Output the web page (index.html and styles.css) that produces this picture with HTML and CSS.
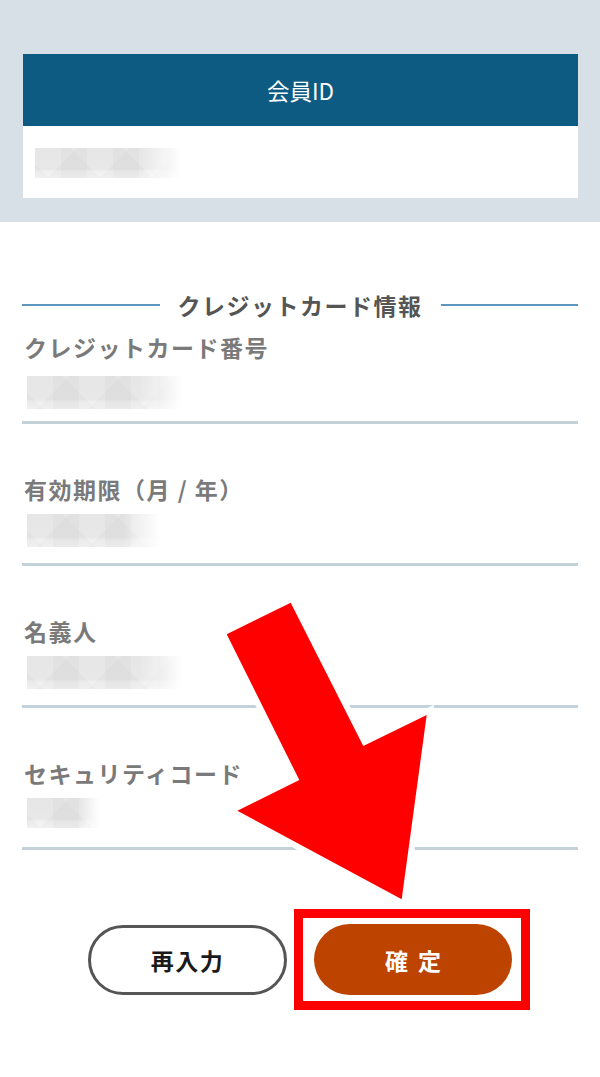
FILE: index.html
```html
<!DOCTYPE html>
<html lang="ja">
<head>
<meta charset="utf-8">
<title>会員ID</title>
<link rel="stylesheet" href="styles.css">
</head>
<body>
<div class="page">
  <section class="top-band">
    <div class="card">
      <div class="card-head">会員ID</div>
      <div class="card-body">
        <div class="blur blur-id"></div>
      </div>
    </div>
  </section>

  <section class="form">
    <h2 class="section-title"><span class="rule"></span><span class="title-text">クレジットカード情報</span><span class="rule"></span></h2>

    <div class="field first">
      <div class="label">クレジットカード番号</div>
      <div class="value"><div class="blur w155"></div></div>
    </div>
    <div class="field">
      <div class="label">有効期限（月 / 年）</div>
      <div class="value"><div class="blur w133"></div></div>
    </div>
    <div class="field">
      <div class="label">名義人</div>
      <div class="value"><div class="blur w155"></div></div>
    </div>
    <div class="field">
      <div class="label">セキュリティコード</div>
      <div class="value"><div class="blur w73"></div></div>
    </div>

    <div class="buttons">
      <button class="btn btn-reset" type="button">再入力</button>
      <div class="confirm-wrap">
        <button class="btn btn-confirm" type="button">確定</button>
        <span class="highlight"></span>
      </div>
    </div>
  </section>

  <svg class="arrow" width="600" height="1077" viewBox="0 0 600 1077" aria-hidden="true">
    <polygon points="226.7,634.3 290.7,602.7 363.3,746 426.7,715 401.7,899.3 237.3,810.7 299.3,780" fill="#ff0000" stroke="#ffffff" stroke-width="12" stroke-linejoin="miter" paint-order="stroke"/>
  </svg>
</div>
</body>
</html>
```

FILE: styles.css
```css
html, body {
  margin: 0;
  padding: 0;
  background: #ffffff;
}

body {
  font-family: "Noto Sans CJK JP", "Noto Sans", sans-serif;
  width: 600px;
}

.page {
  position: relative;
  width: 600px;
  height: 1077px;
  overflow: hidden;
}

.top-band {
  background: #d8e0e7;
  padding: 54px 22px 24px 23px;
}

.card {
  background: #ffffff;
}

.card-head {
  height: 72px;
  background: #0d5a83;
  color: #ffffff;
  font-size: 22.5px;
  font-weight: 400;
  display: flex;
  align-items: center;
  justify-content: center;
}

.card-body {
  height: 72px;
  padding: 22px 0 0 12px;
  box-sizing: border-box;
}

.blur {
  height: 33px;
  background:
    linear-gradient(90deg, rgba(255,255,255,0) 72%, #ffffff 100%),
    linear-gradient(135deg, rgba(255,255,255,0) 50%, rgba(0,0,0,0.02) 50%) 0 0 / 52px 33px,
    linear-gradient(45deg, rgba(0,0,0,0.02) 50%, rgba(255,255,255,0) 50%) 26px 0 / 52px 33px,
    linear-gradient(180deg, #e6e6e6 0%, #e8e8e8 72%, #efefef 76%, #f5f5f5 100%);
}

.blur-id {
  width: 146px;
  height: 30px;
}

.w155 { width: 155px; }
.w133 { width: 133px; }
.w73 { width: 73px; height: 30px; }

.form {
  padding: 0 22px;
}

.section-title {
  margin: 68px 0 0;
  height: 30px;
  display: flex;
  align-items: center;
  gap: 18px;
  font-size: 23px;
  font-weight: 700;
  line-height: 30px;
  color: #555555;
  letter-spacing: 1.5px;
}

.rule {
  flex: 1;
  height: 2px;
  background: #5c96c1;
}

.title-text {
  white-space: nowrap;
}

.field {
  padding-top: 50px;
  border-bottom: 3px solid #c3d2d9;
}

.field.first {
  padding-top: 12px;
}

.label {
  font-size: 23px;
  font-weight: 700;
  line-height: 30px;
  color: #7a7a7a;
  letter-spacing: 1.5px;
  padding-left: 2px;
}

.value {
  height: 59px;
  padding: 10px 0 0 5px;
  box-sizing: border-box;
}

.field.first .value {
  padding-top: 14px;
}

.buttons {
  margin-top: 74px;
  display: flex;
  justify-content: center;
  align-items: center;
  gap: 27px;
}

.btn {
  font-family: "Noto Sans CJK JP", "Noto Sans", sans-serif;
  font-size: 23px;
  font-weight: 700;
  cursor: pointer;
  display: flex;
  align-items: center;
  justify-content: center;
  padding: 0;
}

.btn-reset {
  width: 199px;
  height: 70px;
  border: 3px solid #555555;
  border-radius: 35px;
  background: #ffffff;
  color: #1a1a1a;
  letter-spacing: 1.5px;
}

.confirm-wrap {
  position: relative;
}

.btn-confirm {
  width: 198px;
  height: 71px;
  border: none;
  border-radius: 36px;
  background: #bd4300;
  color: #ffffff;
  letter-spacing: 10px;
  padding-left: 10px;
}

.highlight {
  position: absolute;
  top: -15px;
  bottom: -15px;
  left: -20px;
  right: -18px;
  border: 9px solid #ff0000;
  pointer-events: none;
}

.arrow {
  position: absolute;
  top: 0;
  left: 0;
  pointer-events: none;
}
```
